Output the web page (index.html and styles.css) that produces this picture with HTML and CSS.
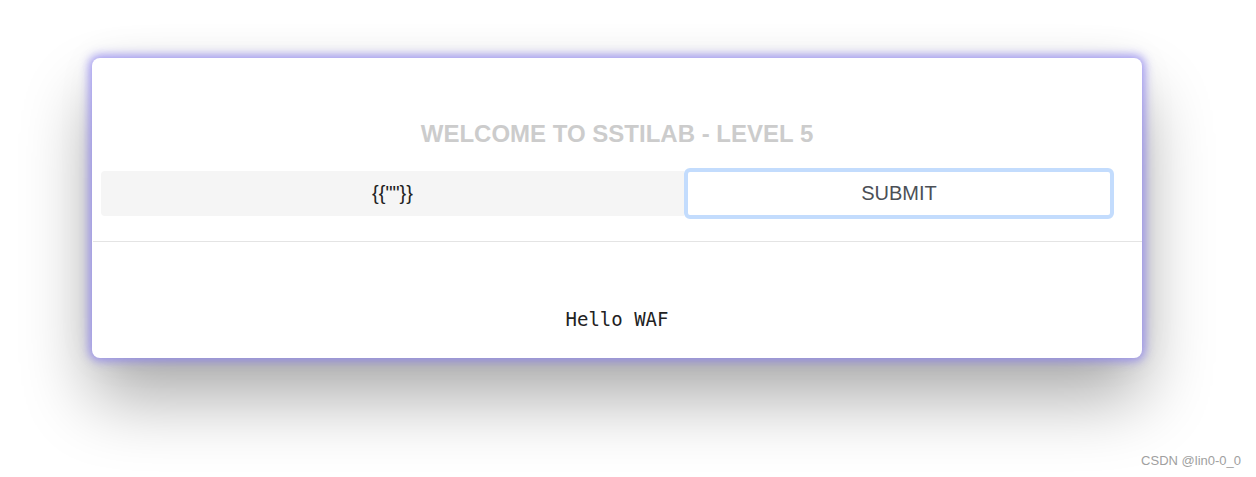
FILE: index.html
```html
<!DOCTYPE html>
<html>
<head>
<meta charset="utf-8">
<link rel="stylesheet" href="styles.css">
</head>
<body>
<div class="page">
  <div class="card">
    <h1 class="title">WELCOME TO SSTILAB - LEVEL 5</h1>
    <form class="form-row">
      <input class="payload" type="text" value='{{""}}'>
      <button class="submit" type="button">SUBMIT</button>
    </form>
    <div class="divider"></div>
    <div class="result">Hello WAF</div>
  </div>
  <div class="watermark">CSDN @lin0-0_0</div>
</div>
</body>
</html>
```
FILE: styles.css
```css
html, body {
  margin: 0;
  padding: 0;
  background: #ffffff;
  height: 100%;
  overflow: hidden;
}
.page {
  position: relative;
  width: 1256px;
  height: 477px;
  padding-top: 58px;
  box-sizing: border-box;
}
.card {
  margin-left: 92px;
  width: 1050px;
  height: 300px;
  background: #ffffff;
  border-radius: 8px;
  box-shadow: 0 0 10px 3px rgba(140, 130, 240, 0.8), 0 0 40px rgba(0, 0, 0, 0.06), 0 40px 70px rgba(0, 0, 0, 0.33);
  display: flex;
  flex-direction: column;
  box-sizing: border-box;
  padding-top: 63px;
}
.title {
  margin: 0;
  font-family: "Liberation Sans", Arial, sans-serif;
  font-weight: bold;
  font-size: 24px;
  line-height: 26px;
  color: #cccccc;
  text-align: center;
}
.form-row {
  display: flex;
  align-items: center;
  margin: 21px 0 0 9px;
}
.payload {
  flex: none;
  width: 583px;
  height: 45px;
  margin: 0;
  box-sizing: border-box;
  border: none;
  border-radius: 4px 0 0 4px;
  background: #f5f5f5;
  font-family: "Liberation Sans", Arial, sans-serif;
  font-size: 20px;
  color: #222;
  text-align: center;
  outline: none;
  padding: 0;
}
.submit {
  flex: none;
  width: 430px;
  height: 51px;
  margin: 0;
  box-sizing: border-box;
  border: 4px solid #c3dcfd;
  border-radius: 6px;
  background: #ffffff;
  font-family: "Liberation Sans", Arial, sans-serif;
  font-size: 20px;
  color: #4b4f56;
  padding: 0;
}
.divider {
  margin-top: 22px;
  height: 1px;
  background: #e4e4e4;
  margin-left: 1px;
}
.result {
  margin-top: 65px;
  font-family: "DejaVu Sans Mono", "Liberation Mono", monospace;
  font-size: 19px;
  line-height: 24px;
  color: #222;
  text-align: center;
}
.watermark {
  position: absolute;
  right: 15px;
  top: 453px;
  font-family: "Liberation Sans", Arial, sans-serif;
  font-size: 13px;
  color: #a0a0a0;
}
```
